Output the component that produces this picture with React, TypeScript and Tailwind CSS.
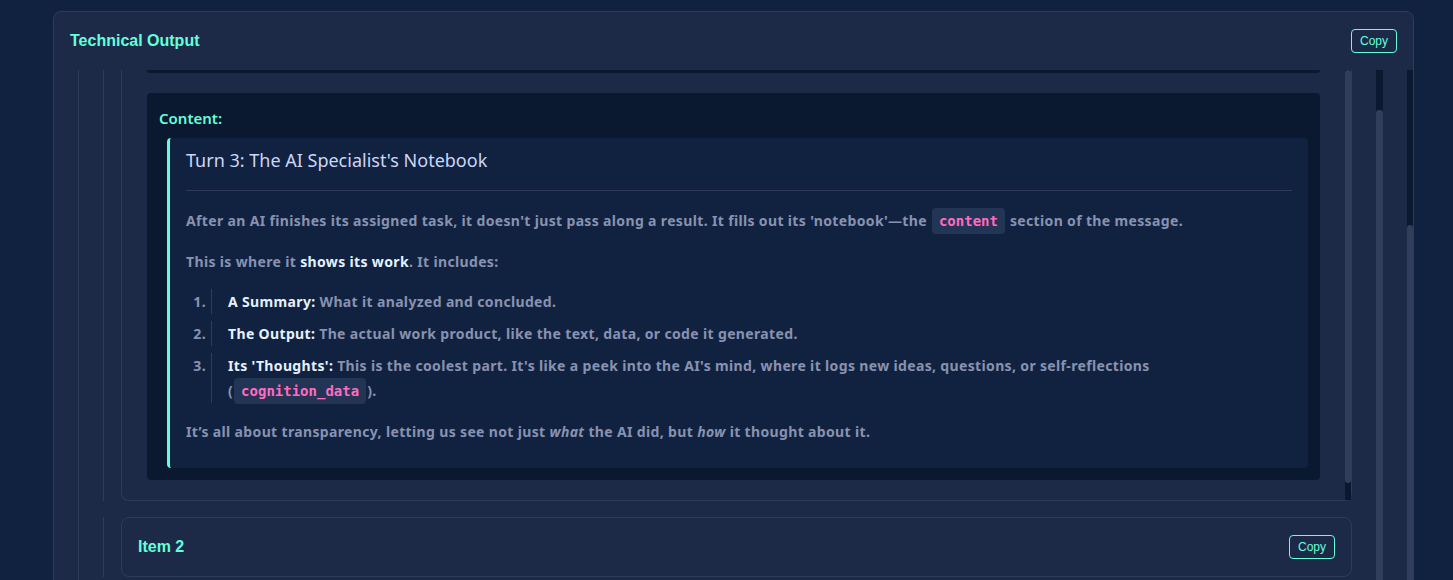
import React from "react";

const SANS = "font-['Noto_Sans','Open_Sans',sans-serif]";
const HEAD = "font-['Liberation_Sans',Arial,sans-serif]";

function CopyButton() {
  return (
    <button
      className={`${HEAD} rounded-[4px] border border-[#64ffda] px-[8px] py-[3px] text-[12px] leading-[16px] text-[#64ffda]`}
    >
      Copy
    </button>
  );
}

function Code({ children }: { children: React.ReactNode }) {
  return (
    <code className="mx-[1px] rounded-[4px] bg-[#233554] px-[7px] py-[5px] font-['DejaVu_Sans_Mono',monospace] text-[14px] font-bold leading-none tracking-normal text-[#ff6bc1]">
      {children}
    </code>
  );
}

function ListItem({ n, children }: { n: number; children: React.ReactNode }) {
  return (
    <li className="flex">
      <span className="w-[20px] shrink-0 text-right">{n}.</span>
      <div className="ml-[5px] border-l border-[#2f3b58] pl-[16px]">{children}</div>
    </li>
  );
}

// fake scrollbar: dark track plus thumb
function Scrollbar({ track, width, bottomTrack }: { track: number; width: string; bottomTrack?: boolean }) {
  return (
    <div className={`flex shrink-0 flex-col ${width} bg-[#0a192f]`}>
      {!bottomTrack && <div style={{ height: track }} />}
      <div className="flex-1 rounded-[3px] bg-[#303d5b]" />
      {bottomTrack && <div style={{ height: track }} />}
    </div>
  );
}

export default function App() {
  return (
    <div className="h-[580px] overflow-hidden bg-[#112240] pl-[53px] pt-[11px]">
      <div className="w-[1361px] rounded-t-[8px] border border-[#2f3b58] bg-[#1d2a47]">
        {/* card header */}
        <div className="flex h-[58px] items-center justify-between px-4">
          <h2 className={`${HEAD} text-[16px] font-bold text-[#64ffda]`}>Technical Output</h2>
          <CopyButton />
        </div>

        {/* card body */}
        <div className="flex h-[520px]">
          <div className="flex-1 px-6">
            <div className="flex h-full border-l border-[#2f3b58]">
              <div className="flex flex-1 flex-col gap-4 px-6">
                {/* item 1 (scrolled) */}
                <div className="flex border-l border-[#2f3b58] pl-[17px]">
                  <div className="flex flex-1 rounded-b-[8px] border-x border-b border-[#2f3b58]">
                    <div className="flex-1 pb-5 pl-[25px] pr-[25px]">
                      <div className="h-[3px] rounded-b-[4px] bg-[#0a192f]" />
                      <div className="mt-5 rounded-[4px] bg-[#0a192f] p-3">
                        <div className={`${SANS} text-[15px] font-semibold leading-[26px] text-[#64ffda]`}>Content:</div>
                        <blockquote
                          className={`${SANS} ml-2 mt-[7px] h-[330px] rounded-[4px] border-l-[3px] border-[#64ffda] bg-[#112240] px-4 pt-2 text-[14px] font-bold leading-[25px] tracking-[0.35px] text-[#8892b0]`}
                        >
                          <h3 className="text-[18px] font-normal leading-[28px] tracking-normal text-[#ccd6f6]">
                            Turn 3: The AI Specialist's Notebook
                          </h3>
                          <hr className="mb-[17px] mt-4 border-[#2f3b58]" />
                          <p className="mb-4">
                            After an AI finishes its assigned task, it doesn't just pass along a result. It fills out its
                            'notebook'—the <Code>content</Code> section of the message.
                          </p>
                          <p className="mb-[15px]">
                            This is where it <span className="text-[#e6f1ff]">shows its work</span>. It includes:
                          </p>
                          <ol className="mb-4 flex flex-col gap-[7px]">
                            <ListItem n={1}>
                              <span className="text-[#e6f1ff]">A Summary:</span> What it analyzed and concluded.
                            </ListItem>
                            <ListItem n={2}>
                              <span className="text-[#e6f1ff]">The Output:</span> The actual work product, like the text,
                              data, or code it generated.
                            </ListItem>
                            <ListItem n={3}>
                              <span className="text-[#e6f1ff]">Its 'Thoughts':</span> This is the coolest part. It's like a
                              peek into the AI's mind, where it logs new ideas, questions, or self-reflections
                              <br />(<Code>cognition_data</Code>).
                            </ListItem>
                          </ol>
                          <p>
                            It’s all about transparency, letting us see not just <em>what</em> the AI did, but{" "}
                            <em>how</em> it thought about it.
                          </p>
                        </blockquote>
                      </div>
                    </div>
                    <Scrollbar track={17} width="w-[6px]" bottomTrack />
                  </div>
                </div>

                {/* item 2 */}
                <div className="flex border-l border-[#2f3b58] pl-[17px]">
                  <div className="flex h-[60px] flex-1 items-center justify-between rounded-[8px] border border-[#2f3b58] px-4">
                    <h3 className={`${HEAD} text-[16px] font-bold text-[#64ffda]`}>Item 2</h3>
                    <CopyButton />
                  </div>
                </div>
              </div>
              <Scrollbar track={40} width="w-[7px]" />
            </div>
          </div>
          <Scrollbar track={155} width="w-[6px]" />
        </div>
      </div>
    </div>
  );
}
